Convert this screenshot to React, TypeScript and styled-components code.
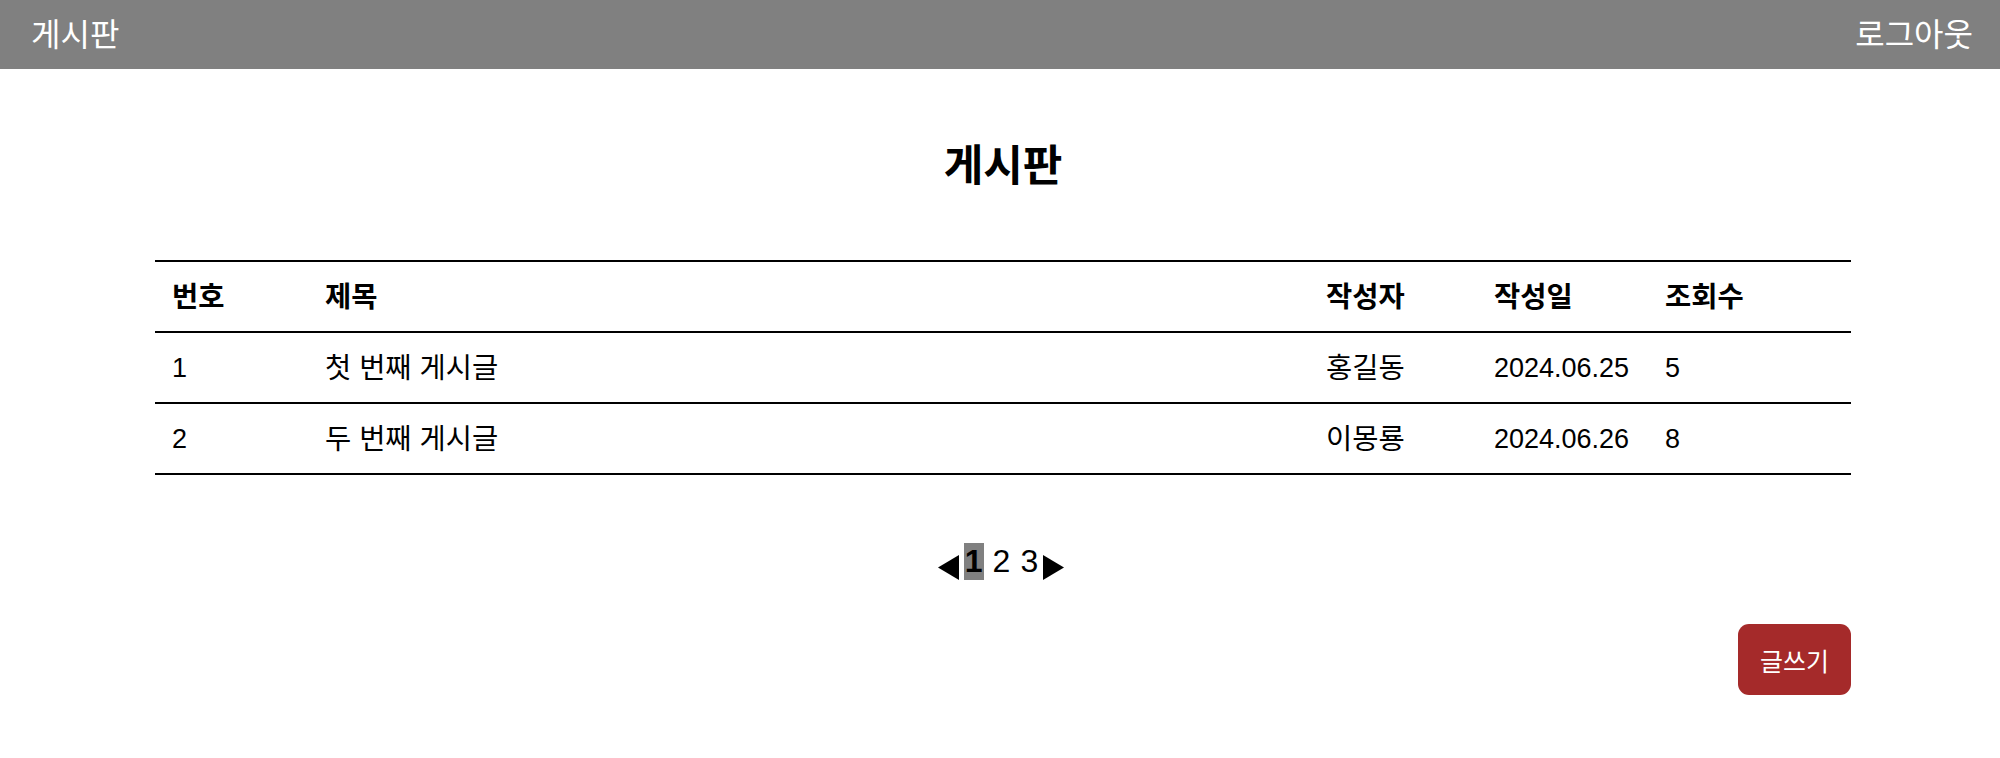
import { FC } from "react";
import styled, { createGlobalStyle } from "styled-components";

const GlobalStyle = createGlobalStyle`
  body {
    margin: 0;
    background: #fff;
    font-family: "Liberation Sans", "Noto Sans CJK KR", sans-serif;
    color: #000;
  }
`;

const TopBar = styled.header`
  height: 69px;
  background: #808080;
  display: flex;
  align-items: center;
  justify-content: space-between;
  padding: 0 27px 0 31px;
`;

const TopBarText = styled.div`
  color: #fff;
  font-size: 32px;
  line-height: 36px;
`;

const Main = styled.main`
  padding: 72px 149px 60px 155px;
`;

const Title = styled.h1`
  margin: 0 0 69px;
  font-size: 43px;
  line-height: 50px;
  font-weight: 700;
  text-align: center;
`;

const Board = styled.div`
  border-top: 2px solid #000;
`;

const Row = styled.div<{ $head?: boolean }>`
  display: grid;
  grid-template-columns: 153px 1fr 168px 171px 203px;
  align-items: center;
  height: 69px;
  border-bottom: 2px solid #000;
  font-size: 27px;
  font-weight: ${({ $head }) => ($head ? 700 : 400)};
`;

// Korean text reads a touch larger than the Latin digits in the shot
const Cell = styled.div<{ $ko?: boolean }>`
  padding-left: 17px;
  line-height: 32px;
  white-space: nowrap;
  font-size: ${({ $ko }) => ($ko ? "28.5px" : "27px")};
`;

const Pager = styled.div`
  display: flex;
  justify-content: center;
  align-items: flex-end;
  margin-top: 68px;
  padding-right: 4px;
  font-size: 32px;
  line-height: 37px;
`;

const Arrow = styled.svg<{ $side: "left" | "right" }>`
  width: 21px;
  height: 25px;
  flex-shrink: 0;
  margin: ${({ $side }) => ($side === "left" ? "0 5px 0 0" : "0 0 0 4px")};
`;

const PageNum = styled.span<{ $active?: boolean }>`
  padding: 0 1px;
  margin: 0 4px;
  background: ${({ $active }) => ($active ? "#808080" : "transparent")};
  font-weight: ${({ $active }) => ($active ? 700 : 400)};
  &:first-of-type {
    margin-left: 0;
  }
  &:last-of-type {
    margin-right: 0;
  }
`;

const Actions = styled.div`
  display: flex;
  justify-content: flex-end;
  margin-top: 44px;
`;

const WriteButton = styled.button`
  width: 113px;
  height: 71px;
  border: none;
  border-radius: 11px;
  background: #a52a2a;
  color: #fff;
  font-family: "Liberation Sans", "Noto Sans CJK KR", sans-serif;
  font-size: 25px;
  cursor: pointer;
`;

const posts = [
  { no: 1, title: "첫 번째 게시글", writer: "홍길동", date: "2024.06.25", views: 5 },
  { no: 2, title: "두 번째 게시글", writer: "이몽룡", date: "2024.06.26", views: 8 },
];

const App: FC = () => {
  return (
    <>
      <GlobalStyle />
      <TopBar>
        <TopBarText>게시판</TopBarText>
        <TopBarText>로그아웃</TopBarText>
      </TopBar>
      <Main>
        <Title>게시판</Title>
        <Board>
          <Row $head>
            <Cell $ko>번호</Cell>
            <Cell $ko>제목</Cell>
            <Cell $ko>작성자</Cell>
            <Cell $ko>작성일</Cell>
            <Cell $ko>조회수</Cell>
          </Row>
          {posts.map((p) => (
            <Row key={p.no}>
              <Cell>{p.no}</Cell>
              <Cell $ko>{p.title}</Cell>
              <Cell $ko>{p.writer}</Cell>
              <Cell>{p.date}</Cell>
              <Cell>{p.views}</Cell>
            </Row>
          ))}
        </Board>
        <Pager>
          <Arrow $side="left" viewBox="0 0 21 25">
            <polygon points="21,0 21,25 0,12.5" fill="#000" />
          </Arrow>
          <PageNum $active>1</PageNum>
          <PageNum>2</PageNum>
          <PageNum>3</PageNum>
          <Arrow $side="right" viewBox="0 0 21 25">
            <polygon points="0,0 21,12.5 0,25" fill="#000" />
          </Arrow>
        </Pager>
        <Actions>
          <WriteButton>글쓰기</WriteButton>
        </Actions>
      </Main>
    </>
  );
};

export default App;
